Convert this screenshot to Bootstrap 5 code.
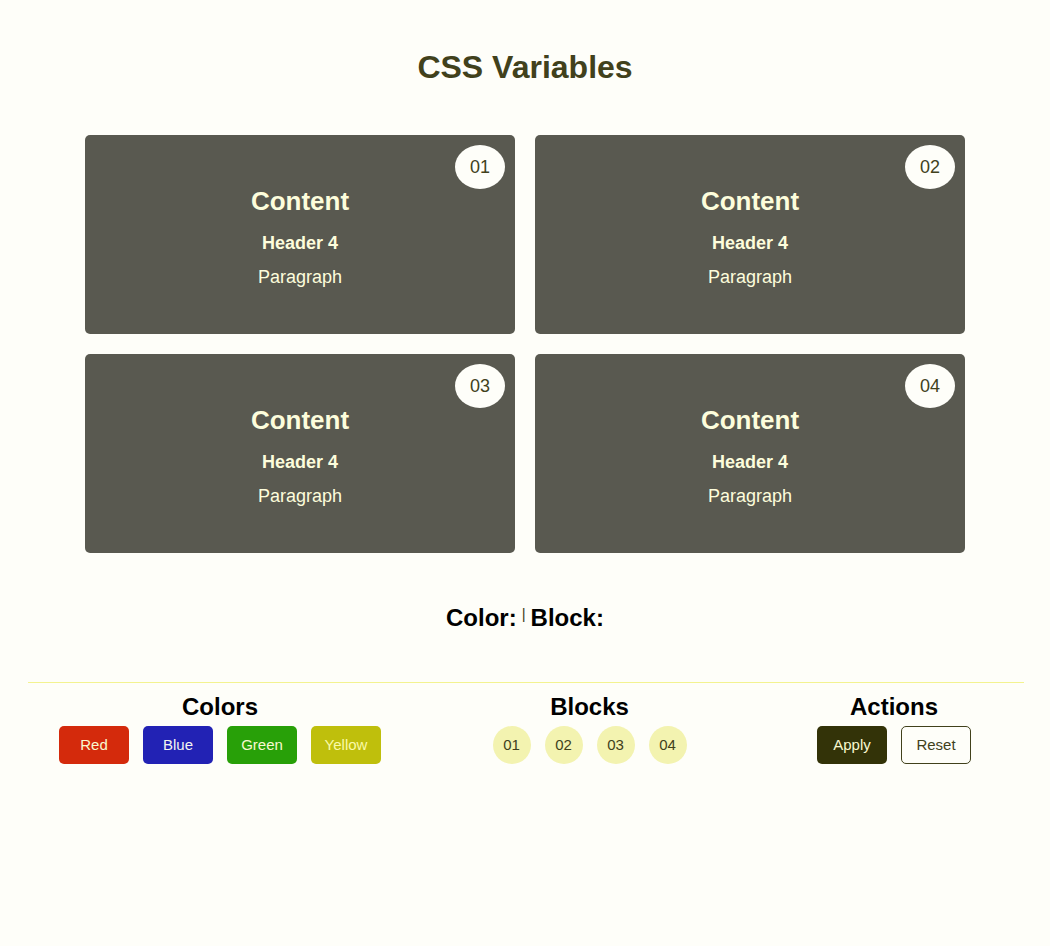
<!DOCTYPE html>
<html lang="en">
<head>
<meta charset="utf-8">
<meta name="viewport" content="width=device-width, initial-scale=1">
<title>CSS Variables</title>
<link href="https://cdn.jsdelivr.net/npm/bootstrap@5.3.0/dist/css/bootstrap.min.css" rel="stylesheet">
<style>
  :root { --page: #fefef9; --ink: #41411c; --block: #595950; --line: #f3f390; }
  body { background: var(--page); color: var(--ink); font: 18px/20px "Liberation Sans", Arial, sans-serif; }
  h1, h2, h3, h4, p { margin: 0; line-height: inherit; }
  .page-title { font-size: 32px; line-height: 36px; font-weight: 700; padding: 49px 0 50px; }
  .blocks { max-width: 880px; display: grid; grid-template-columns: 1fr 1fr; gap: 20px; }
  .block { background: var(--block); color: #fdfddc; border-radius: 5px; padding: 51px 20px 47px; }
  .block h2 { font-size: 26px; line-height: 30px; font-weight: 700; margin-bottom: 17px; }
  .block h4 { font-size: 18px; font-weight: 700; margin-bottom: 14px; }
  .block-no { position: absolute; top: 10px; right: 10px; padding: 12px 15px; border-radius: 50%; background: var(--page); color: var(--ink); }
  .status { padding: 51px 0 50px; gap: 5px; }
  .status h3, .panel h3 { font-size: 24px; line-height: 28px; font-weight: 700; color: #000; }
  .status span { font-size: 15px; line-height: 20px; }
  .controls { margin: 0 26px 0 28px; padding: 10px 3px 0 0; border-top: 1px solid var(--line); display: grid; grid-template-columns: 384fr 355fr 254fr; }
  .panel h3 { margin-bottom: 5px; }
  .panel-row { gap: 14px; }
  .key { --bs-btn-padding-x: 0; --bs-btn-padding-y: 0; --bs-btn-font-size: 15px; --bs-btn-line-height: 20px; --bs-btn-border-radius: 5px; width: 70px; height: 38px; --bs-btn-color: #f8f8d0; }
  .key-red { background: #d42a0c; }
  .key-blue { background: #2222b4; --bs-btn-color: #f4f4f0; }
  .key-green { background: #28a008; }
  .key-yellow { background: #bfbf0c; --bs-btn-color: #fafaa8; }
  .key-round { width: 38px; border-radius: 50%; background: #f3f3b0; --bs-btn-color: var(--ink); }
  .key-apply { background: #333308; }
  .key-reset { border-color: var(--ink); --bs-btn-color: var(--ink); }
  @media (max-width: 800px) {
    .controls, .blocks { grid-template-columns: 1fr; }
    .blocks { margin: 0 20px; }
    .controls { row-gap: 20px; }
  }
</style>
</head>
<body>
<header><h1 class="page-title text-center">CSS Variables</h1></header>
<main>
  <section class="blocks mx-auto text-center">
    <article class="block position-relative"><span class="block-no">01</span><h2>Content</h2><h4>Header 4</h4><p>Paragraph</p></article>
    <article class="block position-relative"><span class="block-no">02</span><h2>Content</h2><h4>Header 4</h4><p>Paragraph</p></article>
    <article class="block position-relative"><span class="block-no">03</span><h2>Content</h2><h4>Header 4</h4><p>Paragraph</p></article>
    <article class="block position-relative"><span class="block-no">04</span><h2>Content</h2><h4>Header 4</h4><p>Paragraph</p></article>
  </section>
  <section class="status d-flex justify-content-center align-items-start">
    <h3>Color:</h3><span>|</span><h3>Block:</h3>
  </section>
</main>
<footer class="controls text-center">
  <section class="panel">
    <h3>Colors</h3>
    <div class="panel-row d-flex justify-content-center">
      <button type="button" class="btn key key-red">Red</button>
      <button type="button" class="btn key key-blue">Blue</button>
      <button type="button" class="btn key key-green">Green</button>
      <button type="button" class="btn key key-yellow">Yellow</button>
    </div>
  </section>
  <section class="panel">
    <h3>Blocks</h3>
    <div class="panel-row d-flex justify-content-center">
      <button type="button" class="btn key key-round">01</button>
      <button type="button" class="btn key key-round">02</button>
      <button type="button" class="btn key key-round">03</button>
      <button type="button" class="btn key key-round">04</button>
    </div>
  </section>
  <section class="panel">
    <h3>Actions</h3>
    <div class="panel-row d-flex justify-content-center">
      <button type="button" class="btn key key-apply">Apply</button>
      <button type="button" class="btn key key-reset">Reset</button>
    </div>
  </section>
</footer>
<script src="https://cdn.jsdelivr.net/npm/bootstrap@5.3.0/dist/js/bootstrap.bundle.min.js"></script>
</body>
</html>
